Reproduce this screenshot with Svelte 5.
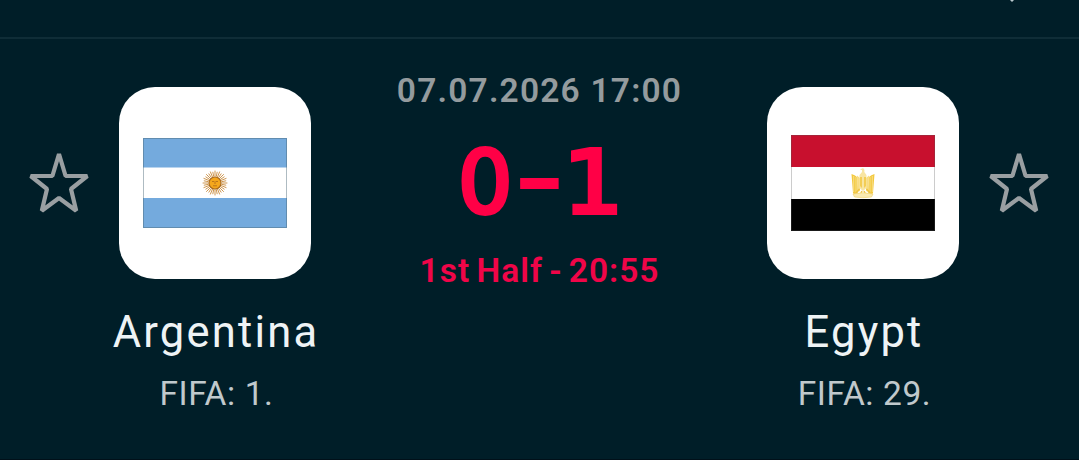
<script>
  const date = '07.07.2026 17:00';
  const status = '1st Half - 20:55';
  const home = { name: 'Argentina', rank: 'FIFA: 1.', goals: 0 };
  const away = { name: 'Egypt', rank: 'FIFA: 29.', goals: 1 };

  // sun rays, every second one a bit shorter
  const rays = Array.from({ length: 32 }, (_, i) => {
    const a = (i * Math.PI) / 16;
    const r = i % 2 ? 11.4 : 12.4;
    return {
      x1: 72 + Math.cos(a) * 6.5,
      y1: 45 + Math.sin(a) * 6.5,
      x2: 72 + Math.cos(a) * r,
      y2: 45 + Math.sin(a) * r
    };
  });
</script>

{#snippet star()}
  <button class="star" aria-label="Favourite">
    <svg width="60" height="62" viewBox="0 0 60 62">
      <path d="M30 1 L36.6 23 H58.3 L42 36 L47.2 57.8 L30 45 L12.8 57.8 L18 36 L1.7 23 H23.4 Z" />
    </svg>
  </button>
{/snippet}

<main>
  <header>
    <svg width="6" height="3" viewBox="0 0 6 3">
      <path d="M1 0 H5 L3 2 Z" fill="#b9c9ce" />
    </svg>
  </header>

  <section class="match">
    {@render star()}

    <div class="team">
      <div class="logo">
        <svg width="144" height="90" viewBox="0 0 144 90">
          <rect width="144" height="90" fill="#fff" />
          <rect width="144" height="29.5" fill="#74aadd" />
          <rect y="60" width="144" height="30" fill="#74aadd" />
          {#each rays as ray}
            <line {...ray} stroke="#c78a3c" stroke-width="0.9" />
          {/each}
          <circle cx="72" cy="45" r="6" fill="#f5a71c" stroke="#a8681a" stroke-width="1.1" />
          <path d="M69 43.5 H71.2 M72.8 43.5 H75 M72 43.5 V46 M70 47.8 H74" fill="none" stroke="#b5711a" stroke-width="0.9" />
          <rect x="0.5" y="0.5" width="143" height="89" fill="none" stroke="#4c6878" stroke-opacity="0.45" />
        </svg>
      </div>
      <div class="name">{home.name}</div>
      <div class="rank">{home.rank}</div>
    </div>

    <div class="info">
      <div class="date">{date}</div>
      <div class="score">
        <span class="zero">{home.goals}</span>
        <span class="dash">-</span>
        <span class="one">{away.goals}</span>
      </div>
      <div class="status">{status}</div>
    </div>

    <div class="team">
      <div class="logo">
        <svg width="144" height="96" viewBox="0 0 144 96">
          <rect width="144" height="96" fill="#fff" />
          <rect width="144" height="32" fill="#c8102e" />
          <rect y="64" width="144" height="32" fill="#000" />
          <path d="M60.5 39 Q64 40 66 42 L67 57 L64.5 61 L62 58 Z M83.5 39 Q80 40 78 42 L77 57 L79.5 61 L82 58 Z" fill="#f3c93f" />
          <path d="M66 40.5 L69 43 V56 L66.5 57 Z M78 40.5 L75 43 V56 L77.5 57 Z" fill="#f8dc80" />
          <path d="M62.7 41 V57 M65 42 V59 M81.3 41 V57 M79 42 V59" stroke="#fbe8a6" stroke-width="0.7" />
          <path d="M69 34.5 L71.5 33.3 Q74 33.5 73.3 37 L75.5 40 V53 L72 56 L68.5 53 V40 L71 37 V35 Z" fill="#f8e5a2" />
          <path d="M69 42 H71 V53 L69 51 Z M75 42 H73 V53 L75 51 Z" fill="#f3cd55" />
          <path d="M68.5 54 L64 59 M75.5 54 L80 59 M71 56 L69 60 M73 56 L75 60" stroke="#efc343" stroke-width="1.4" />
          <path d="M62 59 Q72 56.5 82 59 L80.5 62 Q72 63.5 63.5 62 Z" fill="#faeab2" stroke="#f0cf66" stroke-width="0.6" />
          <rect x="0.5" y="0.5" width="143" height="95" fill="none" stroke="#555" stroke-opacity="0.3" />
        </svg>
      </div>
      <div class="name">{away.name}</div>
      <div class="rank">{away.rank}</div>
    </div>

    {@render star()}
  </section>
</main>

<style>
  :global(body) {
    background: #001e28;
  }

  main {
    box-sizing: border-box;
    height: 460px;
    overflow: hidden;
    background: #001e28;
    border-bottom: 1px solid #001019;
    font-family: Roboto, "Liberation Sans", sans-serif;
  }

  header {
    display: flex;
    justify-content: flex-end;
    align-items: flex-start;
    box-sizing: border-box;
    height: 39px;
    padding-right: 64px;
    border-bottom: 2px solid #0f2d37;
  }

  .match {
    display: grid;
    grid-template-columns: 60px 252px 1fr 252px 60px;
    padding: 48px 30px 0 29px;
  }

  .star {
    width: 60px;
    height: 62px;
    margin-top: 66px;
    padding: 0;
    border: 0;
    background: none;
  }

  .star svg {
    display: block;
  }

  .star path {
    fill: none;
    stroke: #999fa2;
    stroke-width: 4.2;
    stroke-linejoin: bevel;
  }

  .team,
  .info {
    display: flex;
    flex-direction: column;
    align-items: center;
    white-space: nowrap;
  }

  .logo {
    display: flex;
    align-items: center;
    justify-content: center;
    width: 192px;
    height: 192px;
    border-radius: 36px;
    background: #fff;
  }

  .name {
    margin-top: 28px;
    padding-left: 2px;
    font-size: 43.5px;
    line-height: 52px;
    letter-spacing: 2.2px;
    color: #eef3f5;
  }

  .rank {
    margin-top: 15px;
    padding-left: 3px;
    font-size: 33.5px;
    line-height: 40px;
    letter-spacing: 0.6px;
    color: #c0c9cc;
  }

  .date {
    margin-top: -16px;
    padding-left: 1px;
    font-size: 33.5px;
    font-weight: 600;
    line-height: 40px;
    letter-spacing: 1.2px;
    color: #949b9e;
  }

  .score {
    display: grid;
    grid-template-columns: 54px 54px 54px;
    justify-items: center;
    margin-top: 22px;
    font-family: "DejaVu Sans Condensed", "DejaVu Sans", sans-serif;
    font-stretch: condensed;
    font-size: 88px;
    line-height: 100px;
    color: #ff0046;
    -webkit-text-stroke: 4px #ff0046;
  }

  .zero {
    transform: scaleX(1.08);
  }

  .dash {
    transform: translateY(-6px) scaleX(1.55);
  }

  .one {
    transform: scaleX(1.2);
  }

  .status {
    margin-top: 18px;
    padding-left: 1px;
    font-size: 33.5px;
    font-weight: 600;
    line-height: 40px;
    letter-spacing: 1px;
    word-spacing: -3px;
    color: #f00548;
  }
</style>
